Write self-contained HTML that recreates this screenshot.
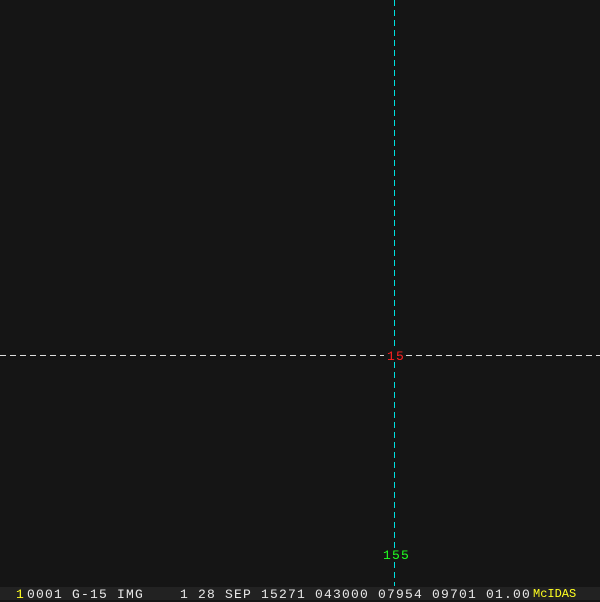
<!DOCTYPE html>
<html><head><style>
body{margin:0;width:600px;height:600px;background:#151515;position:relative;overflow:hidden;font-family:"Liberation Mono",monospace}
.t{position:absolute;font-size:13px;letter-spacing:1.2px;line-height:13px;color:#e8e8e8;white-space:pre}
</style></head><body>
<svg width="600" height="600" style="position:absolute;left:0;top:0">
<line x1="394.5" y1="0" x2="394.5" y2="349" stroke="#00e0e0" stroke-width="1" stroke-dasharray="6,4"/>
<line x1="394.5" y1="362" x2="394.5" y2="548" stroke="#00e0e0" stroke-width="1" stroke-dasharray="6,4"/>
<line x1="394.5" y1="562" x2="394.5" y2="586" stroke="#00e0e0" stroke-width="1" stroke-dasharray="6,4"/>
<line x1="0" y1="355.5" x2="384" y2="355.5" stroke="#dddddd" stroke-width="1" stroke-dasharray="6,4"/>
<line x1="406" y1="355.5" x2="600" y2="355.5" stroke="#dddddd" stroke-width="1" stroke-dasharray="6,4"/>
<rect x="0" y="587" width="600" height="13" fill="#222"/>
</svg>
<div class="t" style="left:387px;top:350px;color:#ff2020">15</div>
<div class="t" style="left:383px;top:549px;color:#20ff20">155</div>
<div class="t" style="left:16px;top:588px;color:#ffff20">1</div>
<div class="t" style="left:27px;top:588px">0001 G-15 IMG</div>
<div class="t" style="left:180px;top:588px">1 28 SEP 15271 043000 07954 09701 01.00</div>
<div class="t" style="left:533px;top:588px;color:#ffff20;font-size:12px;letter-spacing:0">McIDAS</div>
</body></html>
